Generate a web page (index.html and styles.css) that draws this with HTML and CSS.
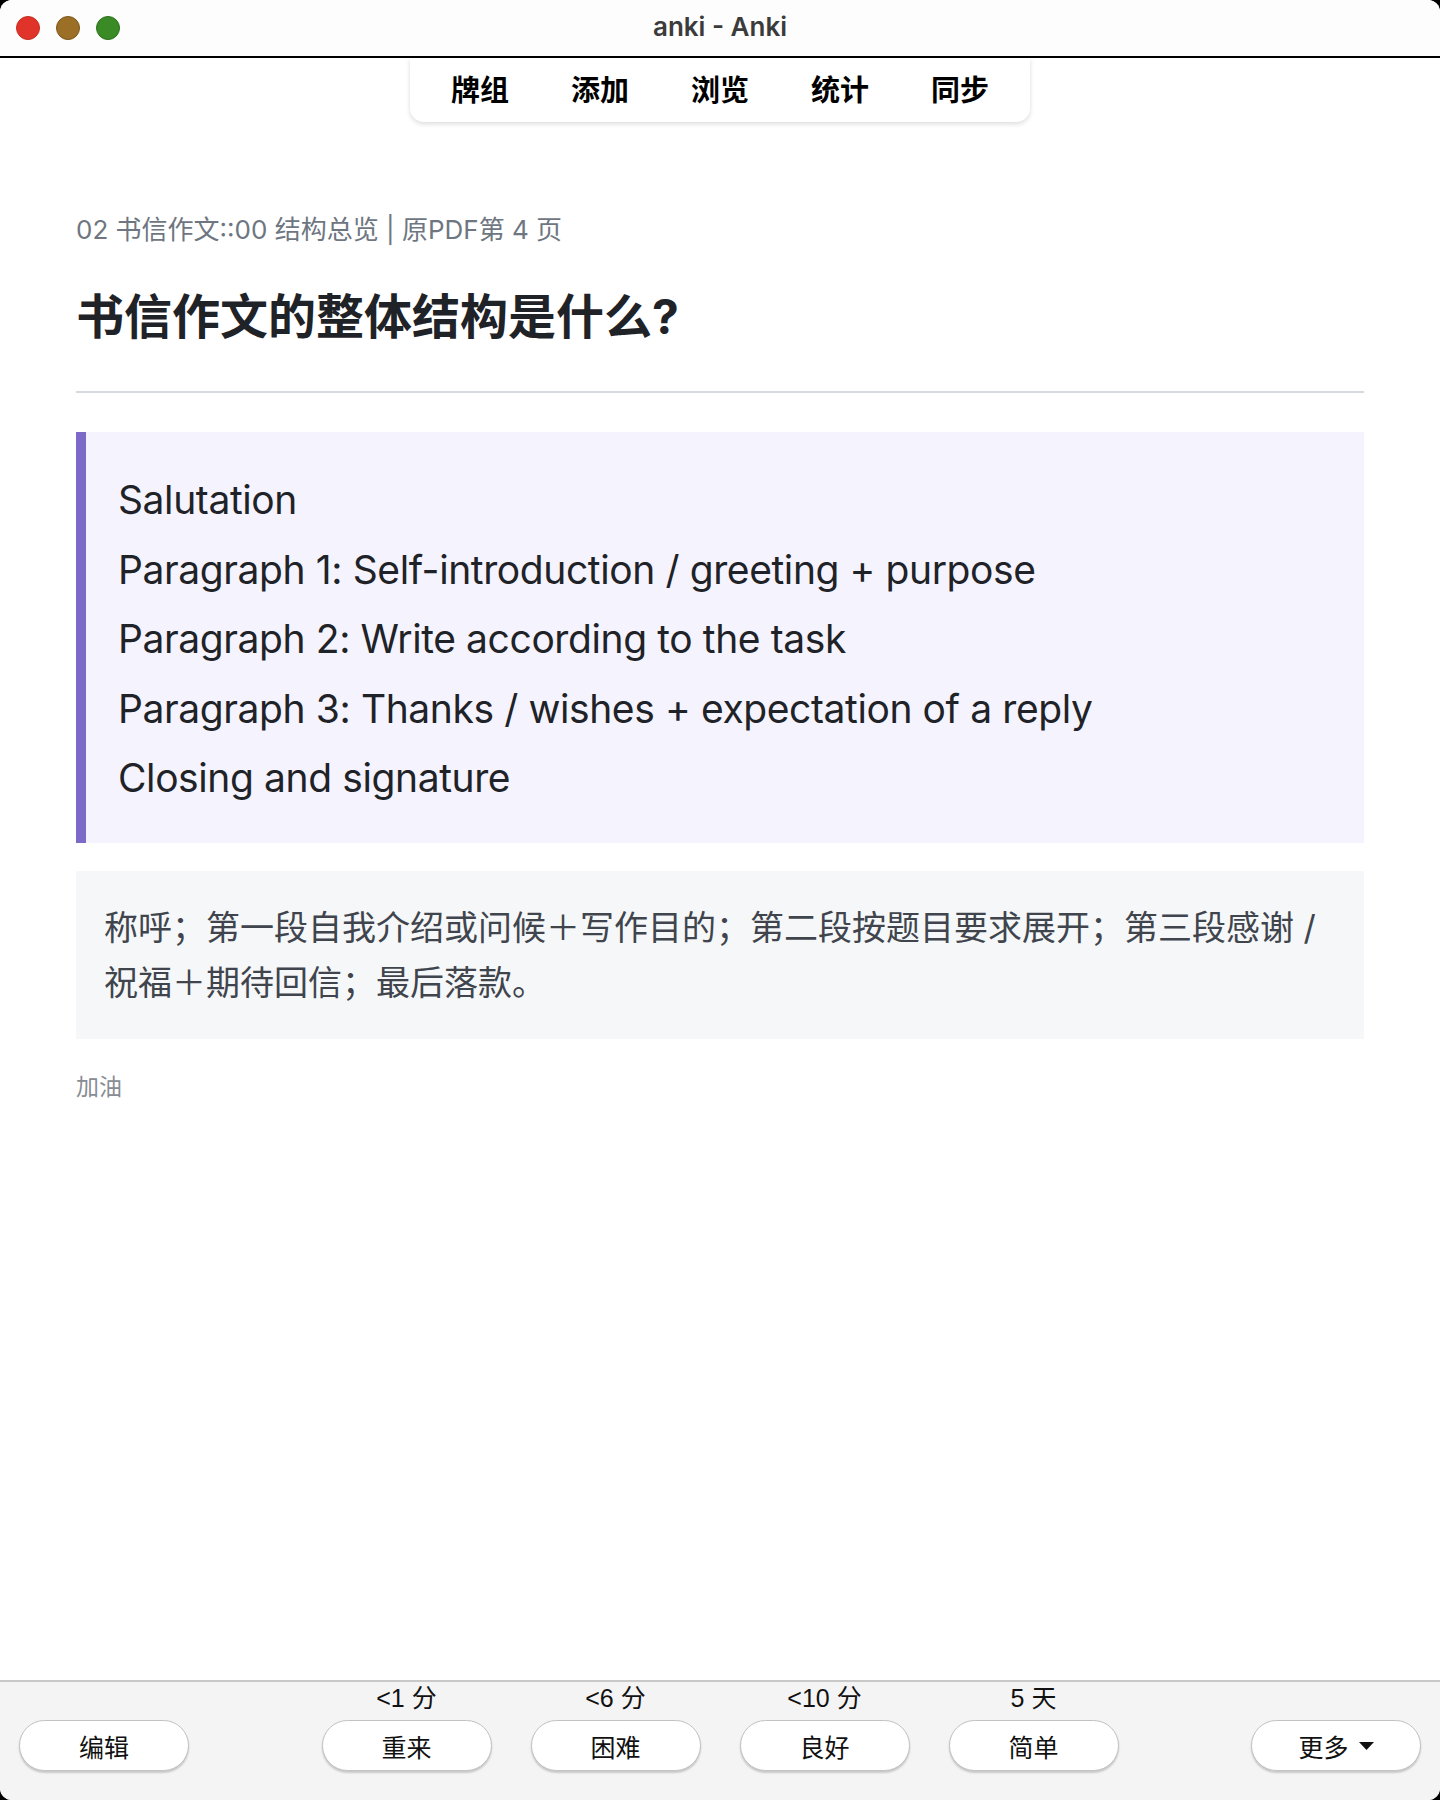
FILE: index.html
```
<!DOCTYPE html>
<html lang="zh-CN">
<head>
    <meta charset="UTF-8">
    <meta name="viewport" content="width=device-width, initial-scale=1.0">
    <title>anki - Anki</title>

    <link rel="stylesheet" href="styles.css">
</head>
<body>

    <div class="window">
        <div class="titlebar">
            <div class="lights">
                <span class="light red"></span>
                <span class="light yellow"></span>
                <span class="light green"></span>
            </div>
            <div class="title">anki - Anki</div>
            <div></div>
        </div>

        <div class="toolbar">
            <nav class="tabs">
                <a>牌组</a>
                <a>添加</a>
                <a>浏览</a>
                <a>统计</a>
                <a>同步</a>
            </nav>
        </div>

        <main class="card">
            <div class="deck">02 书信作文::00 结构总览 | 原PDF第 4 页</div>
            <h1 class="question">书信作文的整体结构是什么?</h1>
            <hr class="divider">
            <div class="structure">
                <div>Salutation</div>
                <div>Paragraph 1: Self-introduction / greeting + purpose</div>
                <div>Paragraph 2: Write according to the task</div>
                <div>Paragraph 3: Thanks / wishes + expectation of a reply</div>
                <div>Closing and signature</div>
            </div>
            <div class="explain">称呼；第一段自我介绍或问候＋写作目的；第二段按题目要求展开；第三段感谢 / 祝福＋期待回信；最后落款。</div>
            <div class="note">加油</div>
        </main>

        <div class="answer-bar">
            <div class="side left">
                <button class="btn">编辑</button>
            </div>
            <div class="answers">
                <div class="answer">
                    <div class="due">&lt;1 分</div>
                    <button class="btn">重来</button>
                </div>
                <div class="answer">
                    <div class="due">&lt;6 分</div>
                    <button class="btn">困难</button>
                </div>
                <div class="answer">
                    <div class="due">&lt;10 分</div>
                    <button class="btn">良好</button>
                </div>
                <div class="answer">
                    <div class="due">5 天</div>
                    <button class="btn">简单</button>
                </div>
            </div>
            <div class="side right">
                <button class="btn more">更多
                    <svg width="15" height="8" viewBox="0 0 15 8"><path d="M0 0 H15 L7.5 8 Z" fill="#111"/></svg>
                </button>
            </div>
        </div>
    </div>

</body>
</html>
```

FILE: styles.css
```
html, body{
    margin: 0;
    padding: 0;
    background-color: #000;
}
.window{
    width: 1440px;
    height: 1800px;
    background-color: #fff;
    border-radius: 12px;
    overflow: hidden;
    display: flex;
    flex-direction: column;
    font-family: "Inter", "Noto Sans CJK SC", sans-serif;
}

/* title bar */
.titlebar{
    height: 56px;
    background-color: #fdfdfd;
    border-bottom: 2px solid #000;
    display: grid;
    grid-template-columns: 1fr auto 1fr;
    align-items: center;
}
.lights{
    display: flex;
    gap: 16px;
    padding-left: 16px;
}
.light{
    width: 22px;
    height: 22px;
    border-radius: 50%;
    border: 1px solid transparent;
}
.red{
    background-color: #e0332a;
    border-color: #c92b22;
}
.yellow{
    background-color: #9b7026;
    border-color: #7c561a;
}
.green{
    background-color: #3a8a26;
    border-color: #2d701c;
}
.title{
    font-size: 26px;
    font-weight: 600;
    color: #3b3b3b;
    padding-bottom: 4px;
}

/* top toolbar */
.toolbar{
    display: flex;
    justify-content: center;
}
.tabs{
    display: flex;
    height: 64px;
    box-sizing: border-box;
    align-items: center;
    padding: 0 10px 4px 10px;
    background-color: #fff;
    border-radius: 0 0 14px 14px;
    box-shadow: 0 2px 5px rgba(0, 0, 0, 0.14);
}
.tabs a{
    width: 120px;
    text-align: center;
    font-family: "Noto Sans CJK SC", sans-serif;
    font-size: 29px;
    font-weight: 700;
    color: #000;
}

/* card */
.card{
    flex: 1;
    padding: 0 76px;
}
.deck{
    margin-top: 90px;
    font-size: 26px;
    line-height: 36px;
    color: #6e7681;
}
.question{
    margin: 38px 0 0 0;
    font-size: 48px;
    line-height: 62px;
    font-weight: 700;
    color: #1f2328;
}
.divider{
    margin: 43px 0 0 0;
    border: none;
    height: 2px;
    background-color: #d6d9de;
}
.structure{
    margin-top: 39px;
    padding: 33px 32px 30px 32px;
    background-color: #f5f4fe;
    border-left: 10px solid #7d69c8;
    font-size: 39px;
    letter-spacing: -0.4px;
    line-height: 69.5px;
    color: #1f2328;
}
.explain{
    margin-top: 28px;
    padding: 29px 20px 29px 28px;
    background-color: #f6f7f9;
    font-size: 34px;
    line-height: 55px;
    color: #40454d;
}
.note{
    margin-top: 32px;
    font-size: 23px;
    line-height: 32px;
    color: #878c94;
}

/* answer buttons */
.answer-bar{
    height: 120px;
    box-sizing: border-box;
    border-top: 2px solid #c8c8c8;
    background-color: #f4f4f4;
    display: grid;
    grid-template-columns: 1fr auto 1fr;
    align-items: end;
    padding: 0 19px 29px 19px;
    font-family: "Liberation Sans", "Noto Sans CJK SC", sans-serif;
}
.side.right{
    justify-self: end;
}
.answers{
    display: flex;
    gap: 39px;
}
.answer{
    display: flex;
    flex-direction: column;
    align-items: center;
}
.due{
    font-size: 25px;
    line-height: 28px;
    color: #111;
    margin-bottom: 8px;
}
.btn{
    width: 170px;
    height: 51px;
    box-sizing: border-box;
    border: 1.5px solid #c2c2c2;
    border-radius: 26px;
    background-color: #fff;
    box-shadow: 0 2px 2px rgba(0, 0, 0, 0.18);
    font-family: "Liberation Sans", "Noto Sans CJK SC", sans-serif;
    font-size: 25px;
    color: #111;
    padding: 0;
    display: flex;
    align-items: center;
    justify-content: center;
}
.more{
    gap: 10px;
}
```
